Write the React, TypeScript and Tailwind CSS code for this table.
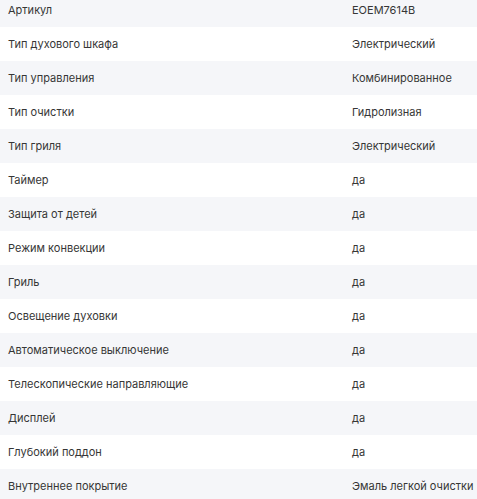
import React from "react";

const specs: [string, string][] = [
  ["Артикул", "EOEM7614B"],
  ["Тип духового шкафа", "Электрический"],
  ["Тип управления", "Комбинированное"],
  ["Тип очистки", "Гидролизная"],
  ["Тип гриля", "Электрический"],
  ["Таймер", "да"],
  ["Защита от детей", "да"],
  ["Режим конвекции", "да"],
  ["Гриль", "да"],
  ["Освещение духовки", "да"],
  ["Автоматическое выключение", "да"],
  ["Телескопические направляющие", "да"],
  ["Дисплей", "да"],
  ["Глубокий поддон", "да"],
  ["Внутреннее покрытие", "Эмаль легкой очистки"],
];

export default function App() {
  return (
    <div className="w-[477px] h-[499px] overflow-hidden bg-white font-['Inter',sans-serif] text-[11px] text-[#363636]">
      <div className="-mt-[7px]">
        {specs.map(([name, value], i) => (
          <div
            key={name}
            className={`flex items-center h-[34px] ${i % 2 === 0 ? "bg-[#f5f6f9]" : "bg-white"}`}
          >
            <div className="w-[352px] pl-[8px] shrink-0">{name}</div>
            <div className="whitespace-nowrap">{value}</div>
          </div>
        ))}
      </div>
    </div>
  );
}
